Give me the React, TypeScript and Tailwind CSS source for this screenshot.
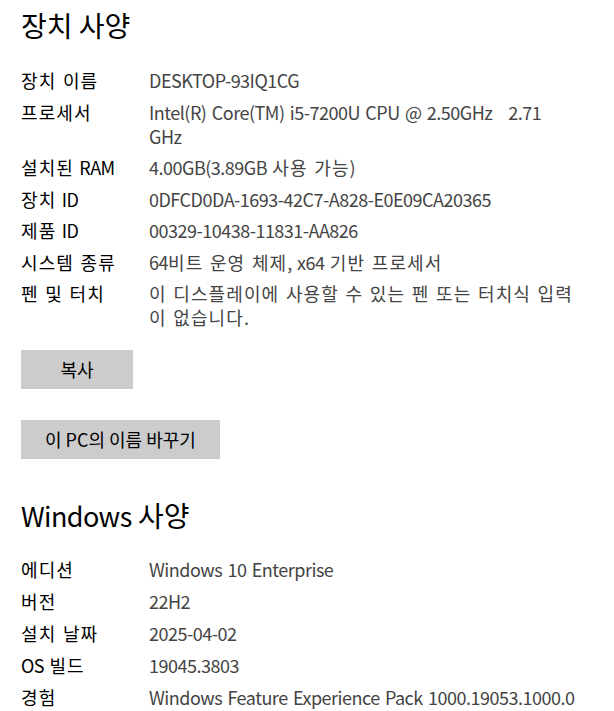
const font = { fontFamily: '"Noto Sans CJK KR", "Noto Sans", sans-serif' }

type Row = { label: string; lines: string[] }

const deviceRows: Row[] = [
  { label: "장치 이름", lines: ["DESKTOP-93IQ1CG"] },
  { label: "프로세서", lines: ["Intel(R) Core(TM) i5-7200U CPU @ 2.50GHz   2.71", "GHz"] },
  { label: "설치된 RAM", lines: ["4.00GB(3.89GB 사용 가능)"] },
  { label: "장치 ID", lines: ["0DFCD0DA-1693-42C7-A828-E0E09CA20365"] },
  { label: "제품 ID", lines: ["00329-10438-11831-AA826"] },
  { label: "시스템 종류", lines: ["64비트 운영 체제, x64 기반 프로세서"] },
  { label: "펜 및 터치", lines: ["이 디스플레이에 사용할 수 있는 펜 또는 터치식 입력", "이 없습니다."] },
]

const windowsRows: Row[] = [
  { label: "에디션", lines: ["Windows 10 Enterprise"] },
  { label: "버전", lines: ["22H2"] },
  { label: "설치 날짜", lines: ["2025-04-02"] },
  { label: "OS 빌드", lines: ["19045.3803"] },
  { label: "경험", lines: ["Windows Feature Experience Pack 1000.19053.1000.0"] },
]

// Malgun Gothic hangul runs wider than Noto's, Segoe latin runs narrower
function Mixed({ text }: { text: string }) {
  const parts = text.split(/([가-힣]+(?: [가-힣]+)*)/).filter(Boolean)
  return (
    <>
      {parts.map((p, i) =>
        /[가-힣]/.test(p) ? (
          <span key={i} className="tracking-[1.1px] [word-spacing:1.5px]">{p}</span>
        ) : (
          <span key={i} className="tracking-[-0.5px] [word-spacing:1.8px]">{p}</span>
        )
      )}
    </>
  )
}

function SpecTable({ rows, gap }: { rows: Row[]; gap: string }) {
  return (
    <div className={`grid grid-cols-[128px_1fr] text-[18px] leading-6 ${gap}`}>
      {rows.map((r) => (
        <div key={r.label} className="contents">
          <div className="text-black whitespace-pre"><Mixed text={r.label} /></div>
          <div className="text-[#444444] whitespace-pre">
            {r.lines.map((l, i) => (
              <div key={i}><Mixed text={l} /></div>
            ))}
          </div>
        </div>
      ))}
    </div>
  )
}

function GrayButton({ children }: { children: React.ReactNode }) {
  return (
    <button className="h-[39px] min-w-[112px] px-[24px] bg-[#cccccc] text-[18px] text-black">
      {children}
    </button>
  )
}

export default function App() {
  return (
    <div className="w-[614px] h-[711px] overflow-hidden bg-white pl-[21px]" style={font}>
      <h1 className="pt-[7px] text-[28px] leading-9 text-black">장치 사양</h1>
      <div className="mt-[25px]">
        <SpecTable rows={deviceRows} gap="gap-y-[7.5px]" />
      </div>
      <div className="mt-[21px] flex flex-col items-start gap-[31px]">
        <GrayButton>복사</GrayButton>
        <GrayButton>이 PC의 이름 바꾸기</GrayButton>
      </div>
      <h2 className="mt-[38px] text-[28px] leading-9 text-black">
        <span className="text-[27px] tracking-[-0.6px]">Windows</span> 사양
      </h2>
      <div className="mt-[23px]">
        <SpecTable rows={windowsRows} gap="gap-y-2" />
      </div>
    </div>
  )
}
